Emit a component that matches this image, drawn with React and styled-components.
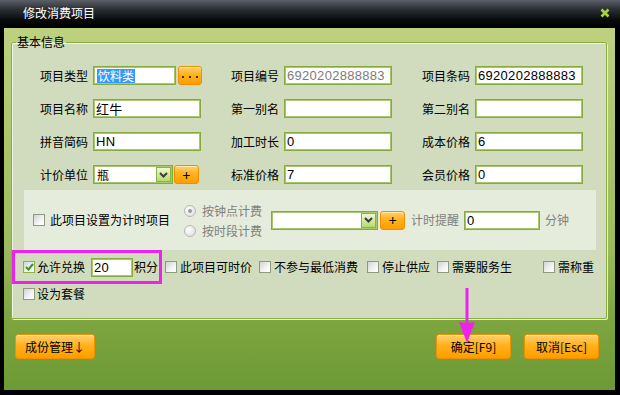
import styled, { createGlobalStyle } from 'styled-components';

const GlobalStyle = createGlobalStyle`
  html, body { margin: 0; padding: 0; background: #000; }
  * { box-sizing: border-box; }
`;

const CJK = `"Noto Sans CJK SC", "Noto Sans", sans-serif`;
const MIX = `"Liberation Sans", "Noto Sans CJK SC", sans-serif`;

const Window = styled.div`
  position: relative;
  width: 620px;
  height: 395px;
  background: #000;
  display: flex;
  flex-direction: column;
  font-family: ${CJK};
  font-size: 12px;
  color: #000;
`;

const TitleBar = styled.div`
  height: 28px;
  flex: none;
  display: flex;
  align-items: center;
  justify-content: space-between;
  padding: 0 10px 1px 23px;
  background: linear-gradient(#5b6068 0%, #2a2e33 35%, #07090b 75%, #000 100%);
  border-bottom: 1px solid #000;
`;

const Title = styled.span`
  color: #fff;
  font-size: 12px;
  line-height: 14px;
`;

const Body = styled.div`
  flex: 1;
  margin: 0 5px 5px 4px;
  padding: 7px 8px 0 7px;
  display: flex;
  flex-direction: column;
  background: linear-gradient(#bed17f 0%, #b2c972 20%, #9dbb5c 60%, #7ea540 80%, #6c9a36 100%);
`;

const Group = styled.fieldset`
  margin: 0;
  padding: 0 0 17px 0;
  min-width: 0;
  border: 1px solid #8aaf40;
  border-radius: 2px;
  background: #d0dcbd;
  box-shadow: inset 1px 1px 0 #eef4e2, 1px 1px 0 #e6efd4;
`;

const Legend = styled.legend`
  margin-left: 4px;
  padding: 0 1px;
  font-size: 12px;
  line-height: 14px;
`;

const FieldGrid = styled.div`
  display: grid;
  grid-template-columns: repeat(3, 161px);
  column-gap: 30px;
  row-gap: 14px;
  padding: 17px 0 0 28px;
`;

const Field = styled.div`
  display: flex;
  align-items: center;
  gap: 5px;
  height: 19px;
`;

const Label = styled.span`
  flex: none;
  width: ${p => p.$w || 48}px;
  line-height: 14px;
  white-space: nowrap;
  color: ${p => (p.$dim ? '#808080' : '#000')};
`;

const Control = styled.div`
  display: flex;
  align-items: center;
  gap: ${p => p.$gap ?? 2}px;
`;

const Input = styled.div`
  width: ${p => p.$w || 108}px;
  height: 19px;
  flex: none;
  display: flex;
  align-items: center;
  padding-left: 2px;
  background: #fff;
  border: 1px solid #86ab3c;
  box-shadow: inset 0 0 0 1px #a9c76c;
  font-family: ${MIX};
  font-size: 13px;
  letter-spacing: 0.3px;
  color: ${p => (p.$grey ? '#7c7c7c' : '#000')};
  white-space: nowrap;
  overflow: hidden;
`;

const Selected = styled.span`
  background: #3399ff;
  color: #fff;
  font-family: ${CJK};
  font-size: 12px;
  letter-spacing: 0;
  line-height: 14px;
  padding: 0 1px;
  margin-left: 1px;
`;

const SelectBox = styled.div`
  width: ${p => p.$w}px;
  height: 19px;
  flex: none;
  display: flex;
  align-items: center;
  justify-content: space-between;
  padding: 1px 1px 1px 3px;
  background: #fff;
  border: 1px solid #86ab3c;
  box-shadow: inset 0 0 0 1px #a9c76c;
`;

const DropBtn = styled.span`
  width: 15px;
  height: 15px;
  display: flex;
  align-items: center;
  justify-content: center;
  background: linear-gradient(#eef8d2, #b4dc6c);
  border: 1px solid #8cb24a;
`;

const OrangeBtn = styled.button`
  width: ${p => p.$w}px;
  height: ${p => p.$h || 19}px;
  flex: none;
  display: flex;
  align-items: center;
  justify-content: center;
  padding: 0;
  margin-left: ${p => p.$ml || 0}px;
  border: 1px solid #f09000;
  border-radius: 3px;
  background: linear-gradient(#ffd070 0%, #ffb21c 45%, #ff9d00 100%);
  box-shadow: inset 0 1px 0 #ffe8a8;
  font-family: ${CJK};
  font-size: ${p => p.$fs || 12}px;
  line-height: 14px;
  color: #000;
  white-space: nowrap;
  cursor: pointer;
`;

const Dots = styled.span`
  display: flex;
  gap: 5px;
  margin-top: 2px;
  &::before, &::after, & > i {
    content: '';
    width: 2px;
    height: 2px;
    background: #4a3000;
  }
`;

const TimerPanel = styled.div`
  margin: 6px 10px 0 12px;
  height: 60px;
  display: flex;
  align-items: center;
  padding-left: 9px;
  background: #e6ecdb;
`;

const RadioCol = styled.div`
  display: flex;
  flex-direction: column;
  margin-left: ${p => p.$ml}px;
  margin-top: 1px;
`;

const RadioRow = styled.div`
  display: flex;
  align-items: center;
  gap: 6px;
  height: 20px;
  color: #808080;
  line-height: 14px;
`;

const Radio = styled.span`
  width: 12px;
  height: 12px;
  border-radius: 50%;
  border: 1px solid #b8b8b8;
  background: radial-gradient(circle at 35% 35%, #ffffff, #d8d8d8);
  display: flex;
  align-items: center;
  justify-content: center;
  &::after {
    content: '';
    width: 4px;
    height: 4px;
    border-radius: 50%;
    background: ${p => (p.$on ? '#9a9a9a' : 'transparent')};
  }
`;

const Inline = styled.div`
  display: flex;
  align-items: center;
  margin-left: ${p => p.$ml || 0}px;
  gap: ${p => p.$gap || 0}px;
`;

const CheckRow = styled.div`
  display: flex;
  align-items: center;
  height: 34px;
`;

const Highlight = styled.div`
  height: 34px;
  display: flex;
  align-items: center;
  padding: 0 1px 0 8px;
  border: 3px solid #ee22ee;
`;

const Box = styled.span`
  width: 12px;
  height: 12px;
  flex: none;
  display: flex;
  align-items: center;
  justify-content: center;
  border: 1px solid ${p => (p.$on ? '#8db24a' : '#8e9a80')};
  background: linear-gradient(135deg, #d2d2d2 0%, #f4f4f4 60%, #ffffff 100%);
`;

const CheckItem = styled.label`
  display: flex;
  align-items: center;
  gap: ${p => p.$gap ?? 3}px;
  margin-left: ${p => p.$ml || 0}px;
  line-height: 14px;
  white-space: nowrap;
`;

const SecondRow = styled.div`
  display: flex;
  padding: 3px 0 0 11px;
`;

const Footer = styled.div`
  display: flex;
  align-items: center;
  margin-top: 15px;
  padding: 0 8px 0 4px;
`;

const Spacer = styled.div`
  flex: 1;
`;

const Annotation = styled.svg`
  position: absolute;
  left: 456px;
  top: 286px;
  pointer-events: none;
`;

const Chevron = () => (
  <svg width="9" height="6" viewBox="0 0 9 6">
    <path d="M1 1 L4.5 4.5 L8 1" fill="none" stroke="#3c3c3c" strokeWidth="2" />
  </svg>
);

const Check = ({ on, ml, gap, children }) => (
  <CheckItem $ml={ml} $gap={gap}>
    <Box $on={on}>
      {on && (
        <svg width="9" height="8" viewBox="0 0 9 8">
          <path d="M1 4 L3.5 6.5 L8 1" fill="none" stroke="#2e9a1e" strokeWidth="2" />
        </svg>
      )}
    </Box>
    {children}
  </CheckItem>
);

const fields = [
  { label: '项目类型', kind: 'type' },
  { label: '项目编号', value: '6920202888883', grey: true },
  { label: '项目条码', value: '6920202888883' },
  { label: '项目名称', value: '红牛' },
  { label: '第一别名', value: '' },
  { label: '第二别名', value: '' },
  { label: '拼音简码', value: 'HN' },
  { label: '加工时长', value: '0' },
  { label: '成本价格', value: '6' },
  { label: '计价单位', kind: 'unit' },
  { label: '标准价格', value: '7' },
  { label: '会员价格', value: '0' },
];

const renderControl = f => {
  if (f.kind === 'type') {
    return (
      <Control>
        <Input $w={83}><Selected>饮料类</Selected></Input>
        <OrangeBtn $w={24}><Dots><i /></Dots></OrangeBtn>
      </Control>
    );
  }
  if (f.kind === 'unit') {
    return (
      <Control $gap={1}>
        <SelectBox $w={80}>
          <span>瓶</span>
          <DropBtn><Chevron /></DropBtn>
        </SelectBox>
        <OrangeBtn $w={25} $fs={14}>+</OrangeBtn>
      </Control>
    );
  }
  return <Input $grey={f.grey}>{f.value}</Input>;
};

export default function App() {
  return (
    <>
      <GlobalStyle />
      <Window>
        <TitleBar>
          <Title>修改消费项目</Title>
          <svg width="10" height="10" viewBox="0 0 10 10">
            <path d="M1.5 1.5 L8.5 8.5 M8.5 1.5 L1.5 8.5" stroke="#a6d63e" strokeWidth="2.6" />
          </svg>
        </TitleBar>
        <Body>
          <Group>
            <Legend>基本信息</Legend>
            <FieldGrid>
              {fields.map(f => (
                <Field key={f.label}>
                  <Label>{f.label}</Label>
                  {renderControl(f)}
                </Field>
              ))}
            </FieldGrid>

            <TimerPanel>
              <Check gap={5}>此项目设置为计时项目</Check>
              <RadioCol $ml={14}>
                <RadioRow><Radio $on />按钟点计费</RadioRow>
                <RadioRow><Radio />按时段计费</RadioRow>
              </RadioCol>
              <Inline $ml={9} $gap={2}>
                <SelectBox $w={107}>
                  <span />
                  <DropBtn><Chevron /></DropBtn>
                </SelectBox>
                <OrangeBtn $w={25} $fs={14}>+</OrangeBtn>
              </Inline>
              <Inline $ml={6} $gap={5}>
                <Label $dim>计时提醒</Label>
                <Input $w={76}>0</Input>
                <Label $dim $w={24}>分钟</Label>
              </Inline>
            </TimerPanel>

            <CheckRow>
              <Highlight>
                <Check on gap={2}>允许兑换</Check>
                <Inline $ml={6} $gap={1}>
                  <Input $w={42}>20</Input>
                  <Label $w={24}>积分</Label>
                </Inline>
              </Highlight>
              <Check ml={3}>此项目可时价</Check>
              <Check ml={7}>不参与最低消费</Check>
              <Check ml={9}>停止供应</Check>
              <Check ml={7}>需要服务生</Check>
              <Check ml={31}>需称重</Check>
            </CheckRow>
            <SecondRow>
              <Check gap={2}>设为套餐</Check>
            </SecondRow>
          </Group>

          <Footer>
            <OrangeBtn $w={80} $h={25}>成份管理↓</OrangeBtn>
            <Spacer />
            <OrangeBtn $w={75} $h={25}>确定[F9]</OrangeBtn>
            <OrangeBtn $w={75} $h={25} $ml={13}>取消[Esc]</OrangeBtn>
          </Footer>
        </Body>

        <Annotation width="22" height="60" viewBox="0 0 22 60">
          <path d="M9.5 2 L12.5 2 L12.5 37 L19 36 L11 57 L3 36 L9.5 37 Z" fill="#ee22ee" />
        </Annotation>
      </Window>
    </>
  );
}
